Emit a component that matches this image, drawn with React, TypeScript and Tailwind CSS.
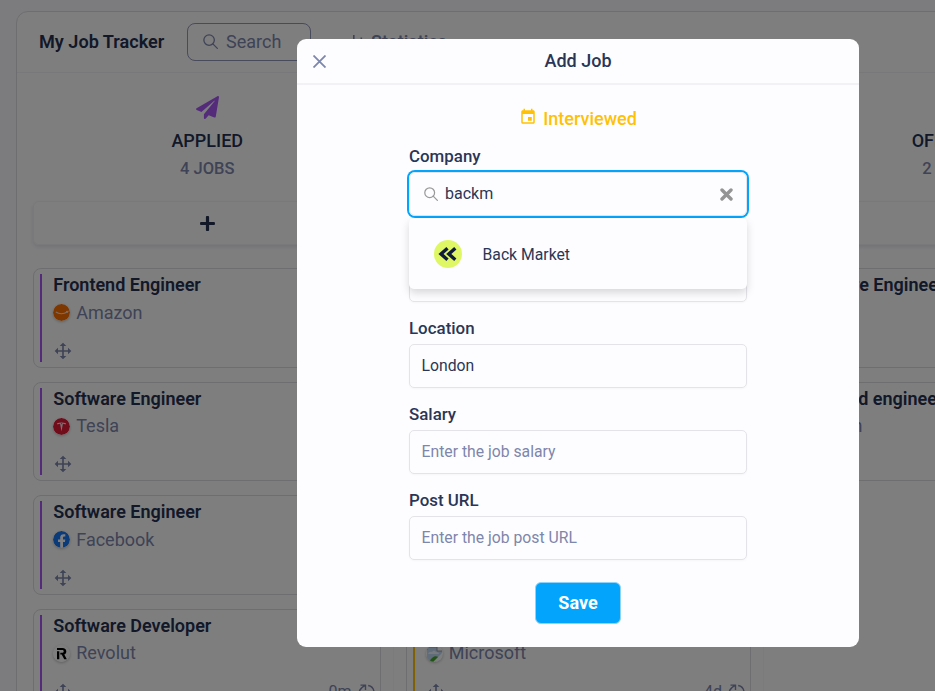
import React from "react";
import { FaPaperPlane, FaPlus } from "react-icons/fa";
import { BiMove } from "react-icons/bi";
import { MdEvent } from "react-icons/md";

type Job = { title: string; company: string; logo: React.ReactNode; age: string };
type Column = {
  name: string;
  count: string;
  icon: React.ReactNode;
  bar: string;
  size: string;
  jobs: Job[];
};

const badge = "block size-[17px] rounded-full shadow-[0_1px_3px_rgba(0,0,0,0.25)]";

function Amazon() {
  return (
    <svg viewBox="0 0 17 17" className={badge}>
      <circle cx="8.5" cy="8.5" r="8.5" fill="#ff6f00" />
      <path d="M2.800 8c3.200 2.200 8 2.200 11.400 0M13 7.500l2-.2-.7 1.400" fill="none" stroke="#f2dccb" strokeWidth="1.100" />
    </svg>
  );
}

function Tesla() {
  return (
    <svg viewBox="0 0 17 17" className={badge}>
      <circle cx="8.5" cy="8.5" r="8.5" fill="#e31937" />
      <path d="M4 5.300q4.500-1.500 9 0l-.5 1.200q-1-.6-2.600-.7L8.500 13.500 7.100 5.800q-1.600.1-2.600.7z" fill="#f3e6e8" />
      <path d="M7.600 5.300h1.800l-.9 1.200z" fill="#e31937" />
    </svg>
  );
}

function Facebook() {
  return (
    <svg viewBox="0 0 17 17" className={badge}>
      <circle cx="8.5" cy="8.5" r="8.5" fill="#1877f2" />
      <path d="M7.200 17v-6.100H5V8.400h2.200V6.600c0-2.200 1.300-3.400 3.300-3.400l1.800.1v2.200h-1c-1 0-1.300.6-1.300 1.300v1.600h2.300l-.4 2.500h-1.900V17z" fill="#fff" />
    </svg>
  );
}

function Revolut() {
  return (
    <svg viewBox="0 0 17 17" className={badge}>
      <circle cx="8.5" cy="8.5" r="8.5" fill="#fdfdff" />
      <path d="M4 6.300h2.300v8H4zM4 3h5.200c2.700 0 4.100 1.400 4.100 3.400 0 1.500-.8 2.500-2 3l2.500 4.900h-2.600L8.700 9.600H7.300V7.700h1.500c1.200 0 1.900-.4 1.900-1.300S10.100 5.100 8.900 5.100H4z" fill="#000" />
    </svg>
  );
}

function MissingLogo() {
  return (
    <svg viewBox="0 0 17 17" className={badge + " overflow-hidden"}>
      <path d="M1 2h10l5 4v10H1z" fill="#c3d9f5" />
      <path d="M2 9q1-3 4-2 2-3 4 0 3 0 3 2z" fill="#eef4fc" />
      <path d="M3 17q5-9 11-4l-5 4z" fill="#43a52c" />
      <path d="M11 2v4h5zM16 8L7 17h9z" fill="#fdfdff" />
      <path d="M1 5V2h10v4h5" fill="none" stroke="#8a8a92" strokeWidth=".8" />
    </svg>
  );
}

function SearchIcon({ className }: { className: string }) {
  return (
    <svg viewBox="0 0 16 16" className={className} fill="none" stroke="currentColor" strokeWidth="1.400" strokeLinecap="round">
      <circle cx="6.500" cy="6.500" r="5.600" />
      <path d="M10.500 10.500l4.800 4.800" />
    </svg>
  );
}

function CycleIcon() {
  return (
    <svg viewBox="0 0 17 17" className="size-[17px]" fill="none" stroke="currentColor" strokeWidth="1.400">
      <path d="M5 15.200C2.500 13.800 1.200 11.500 1.200 8.800 1.200 6 3 3.500 7 1.300M2.500 1.100h5V6M10.200 1.500A7.200 7.200 0 0 1 16 8.200c0 2.700-1.500 5-4.500 6.700M15.500 15.700h-4.600V11" />
    </svg>
  );
}

const amazon = <Amazon />;
const tesla = <Tesla />;
const facebook = <Facebook />;

const columns: Column[] = [
  {
    name: "APPLIED",
    count: "4 JOBS",
    icon: <FaPaperPlane className="size-[23px] text-[#a855f7]" />,
    bar: "bg-[#a855f7]",
    size: "w-[360.500px]",
    jobs: [
      { title: "Frontend Engineer", company: "Amazon", logo: amazon, age: "" },
      { title: "Software Engineer", company: "Tesla", logo: tesla, age: "" },
      { title: "Software Engineer", company: "Facebook", logo: facebook, age: "" },
      { title: "Software Developer", company: "Revolut", logo: <Revolut />, age: "0m" },
    ],
  },
  {
    name: "INTERVIEWED",
    count: "4 JOBS",
    icon: <MdEvent className="size-[23px] text-[#ffc107]" />,
    bar: "bg-[#ffc107]",
    size: "w-[358.500px]",
    jobs: [
      { title: "Engineer", company: "Amazon", logo: amazon, age: "" },
      { title: "Engineer", company: "Tesla", logo: tesla, age: "" },
      { title: "Engineer", company: "Meta", logo: facebook, age: "" },
      { title: "Engineer", company: "Microsoft", logo: <MissingLogo />, age: "4d" },
    ],
  },
  {
    name: "OFFERED",
    count: "2 JOBS",
    icon: null,
    bar: "bg-[#22c55e]",
    size: "w-[359px]",
    jobs: [
      { title: "Software Engineer", company: "Uber", logo: tesla, age: "" },
      { title: "Frontend engineer", company: "Orion", logo: facebook, age: "" },
    ],
  },
];

function JobCard({ job, bar }: { job: Job; bar: string }) {
  return (
    <article className="mb-[14px] flex h-[99.500px] shrink-0 rounded-lg border border-[#dcdce0] px-[6px] py-[5px]">
      <div className={"w-[2px] shrink-0 " + bar} />
      <div className="ml-[11.250px] flex min-w-0 flex-1 flex-col">
        <h3 className="-mt-px h-[23px] text-[18px] leading-[23px] font-semibold whitespace-nowrap text-[#25304f]">{job.title}</h3>
        <div className="mt-[4.500px] flex h-6 items-center gap-[6px] text-[18px] text-[#7d86ab]">
          {job.logo}
          <span className="leading-6">{job.company}</span>
        </div>
        <div className="-mr-px mt-[15px] flex h-6 items-center justify-between text-[16px] text-[#7d86ab]">
          <BiMove className="size-5" />
          {job.age && (
            <span className="flex items-center gap-[6px] leading-6">
              {job.age}
              <CycleIcon />
            </span>
          )}
        </div>
      </div>
    </article>
  );
}

function Board() {
  return (
    <main className="mt-[11px] ml-4 h-[760px] w-[1160px] rounded-tl-xl border border-[#dcdce0] bg-[#fdfdff]">
      <header className="flex h-[61px] items-center border-b border-[#f0f0f4] pl-[22px]">
        <h1 className="w-[148px] pb-px text-[18.100px] leading-6 font-semibold whitespace-nowrap text-[#25304f]">My Job Tracker</h1>
        <div className="flex h-[38px] w-[124px] items-center gap-[8px] rounded-lg border border-[#8f96b8] pb-[2px] pl-[15px] text-[18px] text-[#7d86ab]">
          <SearchIcon className="size-[15px]" />
          Search
        </div>
        <div className="ml-[40px] flex items-center gap-[6px] pb-px text-[18px] leading-6 font-medium text-[#7d86ab]">
          <svg viewBox="0 0 14 14" className="mb-px size-[14px]" fill="currentColor">
            <path d="M2 1h1.600v12H2zM6 7h1.600v6H6zM9.500 3.500h1.600V13H9.500z" />
          </svg>
          <span className="text-[18.100px]">Statistics</span>
        </div>
      </header>
      <div className="flex pl-4">
        {columns.map((column) => (
          <section
            key={column.name}
            className={"mr-3 flex shrink-0 flex-col border-r border-[#f6f6fa] pr-[12px] " + column.size}
          >
            <div className="flex h-[128px] flex-col items-center pt-[23px] pl-px">
              <div className="h-[23px]">{column.icon}</div>
              <h2 className="mt-[10px] text-[18px] leading-6 font-medium text-[#25304f]">{column.name}</h2>
              <p className="mt-[4px] text-[16.500px] leading-6 font-medium text-[#7d86ab]">{column.count}</p>
            </div>
            <button className="mb-[23px] flex h-[44px] w-full items-center justify-center rounded-md border border-[#f3f3f7] pl-px shadow-[0_2px_4px_rgba(60,60,110,0.13)]">
              <FaPlus className="size-[17px] text-[#25304f]" />
            </button>
            {column.jobs.map((job, index) => (
              <JobCard key={index} job={job} bar={column.bar} />
            ))}
          </section>
        ))}
      </div>
    </main>
  );
}

const inputBox =
  "flex h-[44px] w-full items-center rounded-[5px] border border-[#e4e4e8] px-[11.500px] text-[15.750px] shadow-[0_1px_2px_rgba(0,0,0,0.03)]";

function Field({ label, children }: { label: string; children: React.ReactNode }) {
  return (
    <div className="relative mb-[14px] w-full">
      <div className="h-7 text-[16.900px] leading-6 font-medium">{label}</div>
      {children}
    </div>
  );
}

function Suggestions() {
  return (
    <div className="absolute top-[74px] left-0 z-10 flex h-[71px] w-full items-center rounded-[5px] bg-[#fdfdff] pl-[25px] text-[15.750px] shadow-[0_4px_8px_rgba(0,0,0,0.15)]">
      <svg viewBox="0 0 28 28" className="size-7">
        <circle cx="14" cy="14" r="14" fill="#dff765" />
        <path d="M13.500 8.300L7 14l6.500 5.700M21.300 8.300l-6.500 5.700 6.500 5.700" fill="none" stroke="#101c3c" strokeWidth="3.400" />
      </svg>
      <span className="ml-[20.500px] pt-[2px]">Back Market</span>
    </div>
  );
}

function AddJobDialog() {
  return (
    <div className="absolute inset-0 z-20 flex items-start bg-black/50 pt-[39px] pl-[297px]">
      <div className="h-[608px] w-[562px] rounded-[9px] bg-[#fdfdff] text-[#2b3656]">
        <div className="flex h-[45.500px] items-center border-b-2 border-[#f2f2f6] px-4">
          <svg viewBox="0 0 13 13" className="mt-px size-[13px] text-[#7d86ab]" fill="none" stroke="currentColor" strokeWidth="1.800">
            <path d="M.5.5l12 12M12.500.5l-12 12" />
          </svg>
          <h2 className="mr-[13px] flex-1 text-center text-[18px] font-medium">Add Job</h2>
        </div>
        <div className="mx-auto flex w-[338px] flex-col items-center pt-[20px]">
          <div className="mb-[11.500px] flex h-[28px] items-center gap-[6px] text-[18px] font-medium text-[#ffc107]">
            <MdEvent className="-mt-[3px] size-[18px]" />
            Interviewed
          </div>
          <Field label="Company">
            <div className="flex h-[44px] w-full items-center rounded-[6px] border border-[#e4e4e8] px-[14px] text-[16px] ring-2 ring-[#03a5fc]">
              <SearchIcon className="mr-[7px] size-[14px] text-[#999]" />
              backm
              <svg viewBox="0 0 13 13" className="-mr-[0.500px] ml-auto size-[13px]" fill="none" stroke="#949494" strokeWidth="3.400" strokeLinecap="round">
                <path d="M2 2l9 9M11 2l-9 9" />
              </svg>
            </div>
            <Suggestions />
          </Field>
          <Field label="Position">
            <div className={inputBox} />
          </Field>
          <Field label="Location">
            <div className={inputBox}>London</div>
          </Field>
          <Field label="Salary">
            <div className={inputBox + " text-[#7d86ab]"}>Enter the job salary</div>
          </Field>
          <Field label="Post URL">
            <div className={inputBox + " text-[#7d86ab]"}>Enter the job post URL</div>
          </Field>
          <button className="mt-[8px] h-[42px] w-[86px] rounded-md border border-[#8fd3fb] bg-[#03a5fc] pb-[2px] text-[18px] font-bold text-white">
            Save
          </button>
        </div>
      </div>
    </div>
  );
}

export default function App() {
  return (
    <div className="relative flex h-[691px] w-[935px] items-start overflow-hidden bg-[#f8f8fd] font-['Roboto',sans-serif]">
      <Board />
      <AddJobDialog />
    </div>
  );
}
